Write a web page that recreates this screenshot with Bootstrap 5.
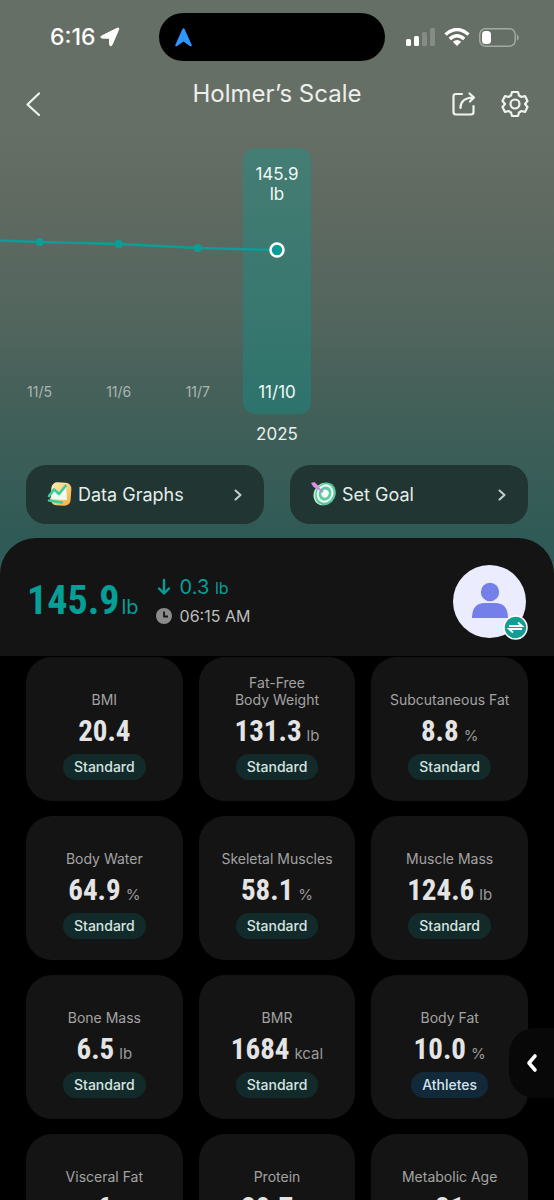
<!DOCTYPE html>
<html lang="en">
<head>
<meta charset="utf-8">
<meta name="viewport" content="width=device-width, initial-scale=1">
<title>Holmer’s Scale</title>
<link href="https://cdn.jsdelivr.net/npm/bootstrap@5.3.0/dist/css/bootstrap.min.css" rel="stylesheet">
<style>
  body { font-family: Inter, sans-serif; background: #000; color: #e6e6e6; }
  button { font-family: inherit; }
  .app-shell { background: #000; }
  .hero { background: linear-gradient(#666f66 0, #666f66 130px, #606a61 200px, #53665e 310px, #446059 400px, #2f5a56 540px); }
  .status-bar { display: grid; grid-template-columns: 1fr auto 1fr; height: 74px; padding: 0 34px 0 24px; }
  .status-side { flex: 1 1 0; }
  .clock-side { padding-left: 26px; }
  .clock-text { font-size: 23px; font-weight: 500; color: #fff; line-height: 28px; }
  .island { width: 226px; height: 48px; border-radius: 24px; background: #000; padding-left: 16px; }
  .signals { gap: 9px; }
  .title-bar { height: 60px; padding: 0 25px; }
  .title-bar h1 { font-size: 24px; line-height: 40px; color: #ecefec; }
  .icon-btn { border: 0; background: none; padding: 0; color: #f0f2f0; line-height: 0; }
  .trend { padding: 14px 0 21px; }
  .seven-days { display: grid; grid-template-columns: repeat(7, 1fr); }
  .trend-grid { height: 266px; }
  .trend-line { top: 14px; left: 0; pointer-events: none; }
  .day { font-size: 14px; line-height: 20px; color: #a9b6b2; padding-bottom: 12px; }
  .day-active { font-size: 17px; line-height: 20px; color: #f2f8f6; background: rgba(0, 160, 150, .32); border-radius: 12px; margin: 0 6px; padding: 16px 0 12px; }
  .year { font-size: 17px; line-height: 20px; padding-top: 10px; grid-column: 4; color: #e8efed; }
  .pills { padding: 0 26px 50px; gap: 26px; }
  .pill { height: 59px; border: 0; border-radius: 20px; background: #213532; color: #e4eeeb; font-size: 18px; padding: 0 21px; }
  .summary { background: #141414; border-radius: 36px 36px 0 0; height: 118px; margin-top: -36px; padding: 8px 28px 0 27px; }
  .narrow { font-family: "Roboto Condensed", "Liberation Sans Narrow", "DejaVu Sans Condensed", sans-serif; font-weight: 700; }
  .weight { font-size: 40px; line-height: 48px; }
  .teal { color: #069f98; }
  .unit-lg { font-size: 20px; line-height: 28px; padding-left: 2px; }
  .changes { padding-left: 17px; }
  .delta { font-size: 20px; line-height: 28px; }
  .delta span { font-size: 16px; }
  .stamp { font-size: 16px; line-height: 28px; color: #bdbdbd; }
  .avatar { width: 73px; height: 73px; background: #ebecfd; }
  .swap { right: -2px; bottom: -2px; }
  .metrics { min-height: 0; overflow-y: auto; scrollbar-width: none; }
  .metrics::-webkit-scrollbar { display: none; }
  .metric-grid { display: grid; grid-template-columns: repeat(3, 1fr); gap: 15px 16px; padding: 1px 26px 26px; }
  .metric { height: 144px; border-radius: 26px; background: #141414; padding: 17px 4px 21px; }
  .metric h2 { font-size: 14px; line-height: 17px; font-weight: 400; color: #a3a3a3; }
  .reading { height: 46px; line-height: 46px; gap: 5px; color: #e4e4e4; }
  .reading-value { font-size: 29px; }
  .reading-unit { font-size: 15px; color: #9a9a9a; }
  .tag { font-size: 14px; line-height: 18px; font-weight: 500; padding: 4px 11px; border-radius: 13px; background: #122b2a; color: #d5e4e1; }
  .tag-blue { background: #112938; color: #d3e2ee; }
  .drawer { right: 0; top: 1028px; width: 45px; height: 70px; border-radius: 26px 0 0 26px; background: #080808; }
</style>
</head>
<body>
<div class="app-shell vh-100 d-flex flex-column overflow-hidden position-relative">
  <header class="hero flex-shrink-0">
    <div class="status-bar align-items-center">
      <div class="clock-side d-flex align-items-center gap-1">
        <span class="clock-text">6:16</span>
        <svg width="20" height="20" viewBox="0 0 20 20" fill="#fff" aria-hidden="true"><path d="M1.500 9 17.300 1.200q2-.8 1.400 1.200L12 17.900q-1.600 2.200-2.400-.2L9.500 11.300 2 11.100q-2.300-.7-.5-2.100z" stroke="#fff"/></svg>
      </div>
      <div class="island d-flex align-items-center">
        <svg width="17" height="19" viewBox="0 0 17 19" fill="#2f96ff" aria-hidden="true"><path d="M7.300 1.200q1.200-2 2.400 0L16.700 17q.3 1.800-1.500 1.200L8.500 13.600 1.800 18.200Q0 18.800.3 17z"/></svg>
      </div>
      <div class="signals d-flex align-items-center justify-content-end">
        <svg width="29" height="18" viewBox="0 0 29 18" fill="#fff" aria-hidden="true"><rect y="11" width="5" height="7" rx="1.500"/><rect x="8" y="8" width="5" height="10" rx="1.500"/><g opacity=".2"><rect x="16" y="4" width="5" height="14" rx="1.500"/><rect x="24" y="0" width="5" height="18" rx="1.500"/></g></svg>
        <svg width="26" height="18" viewBox="0 0 26 18" fill="none" stroke="#fff" stroke-width="3.400" aria-hidden="true"><path d="M1.500 6.500Q13-3.500 24.500 6.500M5.800 11Q13 4.500 20.200 11"/><path d="M8.800 13.800Q13 10.400 17.200 13.800L13 18z" fill="#fff" stroke="none"/></svg>
        <svg width="41" height="19" viewBox="0 0 41 19" aria-hidden="true"><rect x=".8" y=".8" width="35.400" height="17.400" rx="5.500" fill="none" stroke="#a3aaa4" stroke-width="1.500"/><rect x="3" y="3" width="9" height="13" rx="3.500" fill="#fff"/><path d="M38 6q3.500 3.500 0 7z" fill="#a3aaa4"/></svg>
      </div>
    </div>
    <div class="title-bar d-flex justify-content-between">
      <div class="status-side d-flex align-items-center">
        <button class="icon-btn" aria-label="Back"><svg width="17" height="24" viewBox="0 0 17 24" fill="none" stroke="currentColor" stroke-width="2.200" stroke-linecap="round" stroke-linejoin="round"><path d="M14 1.500 2.500 12.500 14 23"/></svg></button>
      </div>
      <h1 class="m-0 fw-normal text-nowrap">Holmer’s Scale</h1>
      <div class="status-side d-flex align-items-center justify-content-end gap-4">
        <button class="icon-btn" aria-label="Share"><svg width="26" height="26" viewBox="0 0 26 26" fill="none" stroke="currentColor" stroke-width="2.200" stroke-linecap="round" stroke-linejoin="round"><path d="M11 3H5Q2.500 3 2.500 5.500V21Q2.500 23.500 5 23.500H20Q22.500 23.500 22.500 21V15M9.500 17Q9.500 7 22 6.500M18.500 2.500 23 6.500 19 10.500"/></svg></button>
        <button class="icon-btn" aria-label="Settings"><svg width="28" height="28" viewBox="0 0 28 28" fill="none" stroke="currentColor" stroke-width="2.200" stroke-linejoin="round"><path d="M11 2H17L18 5.500 20.500 7 24 6 26.500 11 24 14 26.500 17 24 22 20.500 21 18 22.500 17 26H11L10 22.500 7.500 21 4 22 1.500 17 4 14 1.500 11 4 6 7.500 7 10 5.500z"/><circle cx="14" cy="14" r="4.500"/></svg></button>
      </div>
    </div>
    <section class="trend position-relative text-center" aria-label="Weight trend">
      <div class="seven-days trend-grid">
        <div class="day d-flex flex-column justify-content-end">11/5</div>
        <div class="day d-flex flex-column justify-content-end">11/6</div>
        <div class="day d-flex flex-column justify-content-end">11/7</div>
        <div class="day-active d-flex flex-column justify-content-between"><div>145.9<br>lb</div><div>11/10</div></div>
      </div>
      <div class="seven-days"><div class="year">2025</div></div>
      <svg class="trend-line position-absolute" width="100%" height="266" stroke="#0c9e96" stroke-width="2.500" fill="#0c9e96" aria-hidden="true">
        <line x1="0" y1="92.500" x2="7.143%" y2="94"/><line x1="7.143%" y1="94" x2="21.429%" y2="96"/><line x1="21.429%" y1="96" x2="35.714%" y2="100"/><line x1="35.714%" y1="100" x2="50%" y2="102"/>
        <g stroke="none"><circle cx="7.143%" cy="94" r="4"/><circle cx="21.429%" cy="96" r="4"/><circle cx="35.714%" cy="100" r="4"/></g>
        <circle cx="50%" cy="102" r="6.500" stroke="#fff"/>
      </svg>
    </section>
    <div class="pills d-flex">
      <button class="pill d-flex align-items-center flex-fill w-50">
        <svg width="27" height="27" viewBox="0 0 27 27" aria-hidden="true"><defs><linearGradient id="gold" x2="1" y2="1"><stop stop-color="#fff0b5"/><stop offset="1" stop-color="#f5ad3c"/></linearGradient></defs><rect x="4" y="1.500" width="20" height="23" rx="6" fill="url(#gold)" transform="rotate(4 14 13)"/><path d="M3 18 8 9l4 4 7-7 1 13z" fill="#effbf2"/><path d="M2 15 7 8.500 12 13 18.500 5M2 19.500 15 21.500" fill="none" stroke="#35cda4" stroke-width="2.600" stroke-linecap="round" stroke-linejoin="round"/></svg>
        <span class="ms-1">Data Graphs</span>
        <svg class="ms-auto" width="10" height="12" viewBox="0 0 10 12" fill="none" stroke="#c3d0cd" stroke-width="2" stroke-linecap="round" stroke-linejoin="round" aria-hidden="true"><path d="M2.500 1.500 7.500 6 2.500 10.500"/></svg>
      </button>
      <button class="pill d-flex align-items-center flex-fill w-50">
        <svg width="27" height="27" viewBox="0 0 27 27" aria-hidden="true"><g transform="rotate(25 15 13)"><ellipse cx="13" cy="14" rx="10" ry="11.500" fill="#b5efd3"/><ellipse cx="14.500" cy="13" rx="10" ry="11.500" fill="#58c79c"/><ellipse cx="14" cy="13" rx="8.200" ry="9.400" fill="#eefbf4"/><ellipse cx="14" cy="13" rx="6.200" ry="7.200" fill="#62caa2"/><ellipse cx="14" cy="13" rx="3.600" ry="4" fill="#f4fff8"/></g><path d="M3 4 12 11" stroke="#c783d8" stroke-width="1.600"/><path d="M0 2 3.500 1 7 4.500 6.500 8 2.500 6z" fill="#e08be4"/></svg>
        <span class="ms-1">Set Goal</span>
        <svg class="ms-auto" width="10" height="12" viewBox="0 0 10 12" fill="none" stroke="#c3d0cd" stroke-width="2" stroke-linecap="round" stroke-linejoin="round" aria-hidden="true"><path d="M2.500 1.500 7.500 6 2.500 10.500"/></svg>
      </button>
    </div>
  </header>

  <section class="summary flex-shrink-0 d-flex align-items-center">
    <div class="d-flex align-items-baseline teal"><span class="narrow weight">145.9</span><span class="unit-lg">lb</span></div>
    <div class="changes">
      <div class="delta teal d-flex align-items-center gap-2"><svg width="16" height="18" viewBox="0 0 16 18" fill="none" stroke="currentColor" stroke-width="2.400" stroke-linecap="round" stroke-linejoin="round" aria-hidden="true"><path d="M8 2V15M3 10.500 8 15.500 13 10.500"/></svg><div>0.3 <span>lb</span></div></div>
      <div class="stamp d-flex align-items-center gap-2"><svg width="16" height="16" viewBox="0 0 16 16" aria-hidden="true"><circle cx="8" cy="8" r="8" fill="#8b8b8b"/><path d="M8 3.500V8.500H12" fill="none" stroke="#141414" stroke-width="1.800"/></svg>06:15 AM</div>
    </div>
    <button class="avatar icon-btn rounded-circle position-relative ms-auto d-flex justify-content-center align-items-center" aria-label="Switch user">
      <svg width="38" height="38" viewBox="0 0 38 38" fill="#747fea" aria-hidden="true"><circle cx="19" cy="10" r="9.200"/><path d="M1 36Q1 21 14 21H24Q37 21 37 36z"/></svg>
      <svg class="swap position-absolute" width="25" height="25" viewBox="0 0 25 25" aria-hidden="true"><circle cx="12.500" cy="12.500" r="11.500" fill="#139e93" stroke="#fff" stroke-width="1.500"/><path d="M6 11H19L15 7.500M19 14H6L10 17.500" fill="none" stroke="#fff" stroke-width="1.800"/></svg>
    </button>
  </section>

  <main class="metrics flex-fill">
    <div class="metric-grid" id="metrics"></div>
  </main>
  <button class="drawer icon-btn position-absolute d-flex align-items-center justify-content-center" aria-label="Open drawer"><svg width="12" height="20" viewBox="0 0 12 20" fill="none" stroke="#fff" stroke-width="3.600" stroke-linecap="round" stroke-linejoin="round"><path d="M9 3 3 10 9 17"/></svg></button>
</div>
<script>
  const metrics = [
    ["BMI", "20.4", ""], ["Fat-Free<br>Body Weight", "131.3", "lb"], ["Subcutaneous Fat", "8.8", "%"],
    ["Body Water", "64.9", "%"], ["Skeletal Muscles", "58.1", "%"], ["Muscle Mass", "124.6", "lb"],
    ["Bone Mass", "6.5", "lb"], ["BMR", "1684", "kcal"], ["Body Fat", "10.0", "%", "Athletes"],
    ["Visceral Fat", "6", ""], ["Protein", "20.7", "%"], ["Metabolic Age", "21", ""]
  ];
  document.getElementById("metrics").innerHTML = metrics.map(([name, value, unit, tag = "Standard"]) =>
    `<article class="metric d-flex flex-column align-items-center justify-content-end text-center">
      <h2 class="m-0">${name}</h2>
      <div class="reading d-flex align-items-baseline"><span class="narrow reading-value">${value}</span>${unit ? `<span class="reading-unit">${unit}</span>` : ""}</div>
      <span class="tag${tag === "Athletes" ? " tag-blue" : ""}">${tag}</span>
    </article>`).join("");
</script>
<script src="https://cdn.jsdelivr.net/npm/bootstrap@5.3.0/dist/js/bootstrap.bundle.min.js"></script>
</body>
</html>
